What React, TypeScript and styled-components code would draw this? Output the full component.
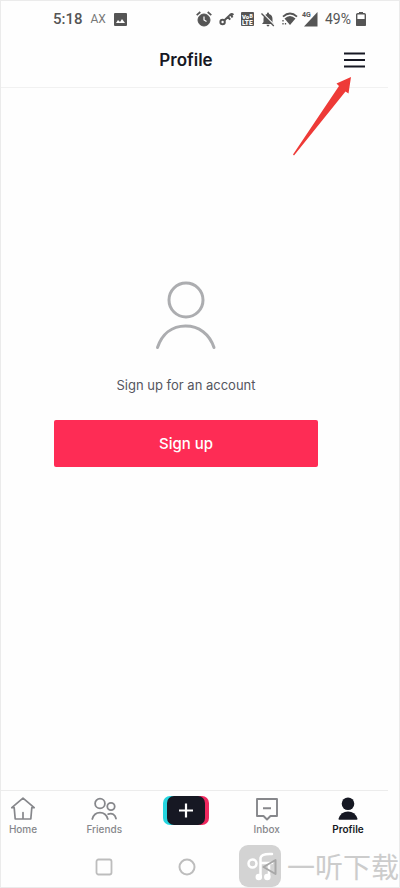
import React from "react";
import styled, { createGlobalStyle } from "styled-components";

const GlobalStyle = createGlobalStyle`
  * { box-sizing: border-box; }
  body { margin: 0; background: #fefefe; }
  button { font: inherit; color: inherit; background: none; border: 0; padding: 0; cursor: pointer; }
  svg { display: block; flex: none; overflow: visible; }
`;

const Screen = styled.div`
  position: relative;
  display: flex;
  flex-direction: column;
  min-height: 100vh;
  border: 1px solid #ebebeb;
  padding-right: 11px;
  overflow: hidden;
  color: #161823;
  font-family: Inter, "Liberation Sans", sans-serif;
`;

const StatusBar = styled.div`
  display: flex;
  align-items: center;
  justify-content: space-between;
  height: 36px;
  padding: 0 22px 0 52px;
  color: #555;
  font-family: Roboto, sans-serif;
`;

const StatusGroup = styled.div<{ $gap: number }>`
  display: flex;
  align-items: center;
  gap: ${(p) => p.$gap}px;
`;

const Clock = styled.span`
  font-size: 15px;
  font-weight: 500;
`;

const Carrier = styled.span`
  font-size: 12px;
  color: #777;
`;

const Battery = styled.span`
  font-size: 14px;
`;

const Header = styled.header`
  display: grid;
  grid-template-columns: 1fr auto 1fr;
  align-items: center;
  height: 51px;
  padding: 0 17px 4px 0;
  border-bottom: 1px solid #f1f1f1;
`;

const Title = styled.h1`
  grid-column: 2;
  margin: 0;
  font-size: 17px;
  line-height: 24px;
  font-weight: 600;
`;

const MenuButton = styled.button`
  justify-self: end;
  padding: 4px 6px;
`;

const Main = styled.main`
  flex: 1;
  display: flex;
  flex-direction: column;
  align-items: center;
  padding: 194px 70px 0 53px;
`;

const Prompt = styled.p`
  margin: 24px 0 25px;
  font-size: 13px;
  line-height: 20px;
  color: #55565e;
`;

const SignUpButton = styled.button`
  align-self: stretch;
  height: 47px;
  border-radius: 2px;
  && {
    background: #fe2c55;
    color: #fff;
    font-size: 15px;
    font-weight: 500;
  }
`;

const TabBar = styled.nav`
  display: flex;
  justify-content: space-between;
  height: 57px;
  padding: 5px 18px 0 0;
  border-top: 1px solid #ececec;
`;

const Tab = styled.button<{ $active?: boolean }>`
  display: flex;
  flex-direction: column;
  align-items: center;
  width: 44px;
  && {
    color: ${(p) => (p.$active ? "#161823" : "#86878b")};
    font-size: 10px;
    line-height: 14px;
    font-weight: ${(p) => (p.$active ? 600 : 500)};
  }
`;

const SystemBar = styled.div`
  position: relative;
  z-index: 1;
  display: flex;
  justify-content: space-between;
  align-items: center;
  height: 40px;
  padding: 0 110px 0 94px;
`;

const SystemButton = styled.button`
  && {
    color: #bdbdbd;
  }
`;

const BackButton = styled(SystemButton)`
  && {
    color: #a8a8a8;
  }
`;

const Pointer = styled.svg`
  position: absolute;
  top: 75px;
  right: 47px;
`;

const Watermark = styled.div`
  position: absolute;
  right: 0;
  bottom: 0;
  display: flex;
  align-items: center;
  gap: 6px;
  color: #ccc;
  font-family: "Noto Sans CJK SC", sans-serif;
  font-size: 28px;
  line-height: 42px;
  white-space: nowrap;
  pointer-events: none;
`;

const ImageIcon = () => (
  <svg width="13" height="13" viewBox="0 0 13 13">
    <path fillRule="evenodd" d="M1 0h11q1 0 1 1v11q0 1-1 1H1q-1 0-1-1V1q0-1 1-1zM2 10h9L8 6 6 9 4 7z" fill="#555" />
  </svg>
);

const AlarmIcon = () => (
  <svg width="16" height="16" viewBox="0 0 16 16" fill="none" stroke="currentColor">
    <circle cx="8" cy="9" r="6" fill="currentColor" />
    <path d="M.7 4.2 4.3 1M15.3 4.2 11.7 1" strokeWidth="1.7" />
    <path d="M8 5.4V9l2.5 1.6" stroke="#fefefe" strokeWidth="1.2" />
  </svg>
);

const KeyIcon = () => (
  <svg width="15" height="14" viewBox="0 0 15 14" fill="none" stroke="currentColor" strokeWidth="2">
    <circle cx="3.6" cy="10" r="2.2" />
    <path d="M5.5 8.2 11 2.9q2-1.5 3.3.1M9 5l2.2 2.6M12 3l1.5 2.5" />
  </svg>
);

const VolteIcon = () => (
  <svg width="13" height="14" viewBox="0 0 13 14">
    <rect width="13" height="14" rx="1" fill="#555" />
    <g fill="#fff" fontFamily="Roboto, sans-serif" fontWeight="900">
      <text x="1" y="6.5" fontSize="6">Vo</text>
      <text x="8.5" y="5.5" fontSize="5">B</text>
      <text x="1" y="13" fontSize="6.5">LTE</text>
    </g>
  </svg>
);

const BellOffIcon = () => (
  <svg width="14" height="15" viewBox="0 0 14 15">
    <path d="M7 .5q1 0 1.100 1.400Q11.500 3 11.500 7v3L13 12H1l1.500-2V7q0-4 3.400-5.100Q6 .5 7 .5zM5.500 12.800h3q-.2 1.700-1.500 1.700t-1.500-1.700z" fill="currentColor" />
    <path d="M1.500 1 14 13.500" stroke="#fefefe" strokeWidth="1.200" />
    <path d="M.5 1.500 12.800 14" stroke="currentColor" strokeWidth="1.300" />
  </svg>
);

const WifiIcon = () => (
  <svg width="16" height="14" viewBox="0 0 16 14">
    <path d="M1 4.700Q8-1.700 15 4.700" stroke="currentColor" strokeWidth="1.800" fill="none" />
    <path d="M2.500 6.500Q8 1.500 13.500 6.500L8 13z" fill="currentColor" />
    <path d="M1 8v1.500M1 11v1.500M3.500 11v1.500" stroke="currentColor" strokeWidth="1.300" />
  </svg>
);

const SignalIcon = () => (
  <svg width="16" height="15" viewBox="0 0 16 15">
    <path d="M15.500 0v14.500H2z" fill="currentColor" />
    <text x="0" y="5" fontSize="7" fontWeight="700" fontFamily="Roboto, sans-serif" fill="currentColor" stroke="#fefefe" strokeWidth="1" paintOrder="stroke">4G</text>
  </svg>
);

const BatteryIcon = () => (
  <svg width="10" height="14" viewBox="0 0 10 14">
    <path d="M3 0h4v2H3zM0 7h10v6q0 1-1 1H1q-1 0-1-1z" fill="currentColor" />
    <rect x=".7" y="1.700" width="8.600" height="11.500" rx="1" stroke="currentColor" strokeWidth="1.400" fill="none" />
  </svg>
);

const MenuIcon = () => (
  <svg width="21" height="16" viewBox="0 0 21 16" stroke="#161823" strokeWidth="2">
    <path d="M0 1.500h21M0 8h21M0 14.500h21" />
  </svg>
);

const PersonOutline = () => (
  <svg width="60" height="69" viewBox="0 0 60 69" fill="none" stroke="#acadb0" strokeWidth="3" strokeLinecap="round">
    <circle cx="30" cy="18" r="17" />
    <path d="M1.500 65.500C6 52 16 44 29.500 44S53.500 52 58 65.500" />
  </svg>
);

const HomeIcon = () => (
  <svg width="26" height="26" viewBox="0 0 26 26" fill="none" stroke="currentColor" strokeWidth="1.700" strokeLinejoin="round" strokeLinecap="round">
    <path d="M1.800 11.700 13 2.200l11.200 9.500h-2.400L20.800 23H5.200L4.200 11.700zM13 16.500V23" />
  </svg>
);

const FriendsIcon = () => (
  <svg width="26" height="26" viewBox="0 0 26 26" fill="none" stroke="currentColor" strokeWidth="1.800" strokeLinecap="round">
    <circle cx="9" cy="7.500" r="4.900" />
    <circle cx="20" cy="10.500" r="3.700" />
    <path d="M1.300 23C2.500 18.500 5.300 16.600 9 16.600S15.500 18.500 16.800 23M17.200 18.100C21 16.500 24.200 18.500 25 22.500" />
  </svg>
);

const CreateIcon = () => (
  <svg width="46" height="30" viewBox="0 0 46 30">
    <rect width="38" height="29" rx="7" fill="#25d5df" />
    <rect x="8" width="38" height="29" rx="7" fill="#f0285f" />
    <rect x="4" width="38" height="29" rx="7" fill="#161823" />
    <path d="M16 14.500h14M23 7.500v14" stroke="#fff" strokeWidth="2.200" />
  </svg>
);

const InboxIcon = () => (
  <svg width="26" height="26" viewBox="0 0 26 26" fill="none" stroke="currentColor" strokeWidth="1.900" strokeLinejoin="round">
    <path d="M3 3h20v17h-6.500L13 23.500 9.500 20H3zM9 12.200h8" />
  </svg>
);

const ProfileIcon = () => (
  <svg width="26" height="26" viewBox="0 0 26 26" fill="currentColor">
    <circle cx="13" cy="7.800" r="6.300" />
    <path d="M3.500 22.700Q6 15.400 13 15.400t9.500 7.300q.2 1.100-1 1.100h-17q-1.200 0-1-1.100z" />
  </svg>
);

const WatermarkLogo = () => (
  <svg width="42" height="42" viewBox="0 0 42 42" fill="none" stroke="#fff" strokeWidth="2.500">
    <rect width="42" height="42" rx="9" fill="#d3d3d3" stroke="none" />
    <circle cx="13.500" cy="18.500" r="4" />
    <path d="M33 9Q22 8.500 21.500 13v19M21.500 18H33M30 18v14" strokeLinecap="round" />
    <circle cx="19.800" cy="32" r="2" fill="#fff" />
    <circle cx="28.300" cy="32" r="2" fill="#fff" />
  </svg>
);

const tabs = [
  { label: "Home", Icon: HomeIcon },
  { label: "Friends", Icon: FriendsIcon },
  { label: "", Icon: CreateIcon },
  { label: "Inbox", Icon: InboxIcon },
  { label: "Profile", Icon: ProfileIcon, active: true },
];

export default function App() {
  return (
    <>
      <GlobalStyle />
      <Screen>
        <StatusBar>
          <StatusGroup $gap={8}>
            <Clock>5:18</Clock>
            <Carrier>AX</Carrier>
            <ImageIcon />
          </StatusGroup>
          <StatusGroup $gap={7}>
            <AlarmIcon />
            <KeyIcon />
            <VolteIcon />
            <BellOffIcon />
            <StatusGroup $gap={4}>
              <WifiIcon />
              <SignalIcon />
            </StatusGroup>
            <StatusGroup $gap={5}>
              <Battery>49%</Battery>
              <BatteryIcon />
            </StatusGroup>
          </StatusGroup>
        </StatusBar>
        <Header>
          <Title>Profile</Title>
          <MenuButton aria-label="Menu">
            <MenuIcon />
          </MenuButton>
        </Header>
        <Main>
          <PersonOutline />
          <Prompt>Sign up for an account</Prompt>
          <SignUpButton>Sign up</SignUpButton>
        </Main>
        <TabBar>
          {tabs.map(({ label, Icon, active }) => (
            <Tab key={label} $active={active} aria-label={label || "Create"}>
              <Icon />
              {label && <span>{label}</span>}
            </Tab>
          ))}
        </TabBar>
        <SystemBar>
          <SystemButton aria-label="Recent apps">
            <svg width="18" height="18" viewBox="0 0 18 18" fill="none" stroke="currentColor" strokeWidth="1.800">
              <rect x="1.500" y="1.500" width="15" height="15" rx="2" />
            </svg>
          </SystemButton>
          <SystemButton aria-label="System home">
            <svg width="18" height="18" viewBox="0 0 18 18" fill="none" stroke="currentColor" strokeWidth="2">
              <circle cx="9" cy="9" r="7.500" />
            </svg>
          </SystemButton>
          <BackButton aria-label="Back">
            <svg width="18" height="18" viewBox="0 0 18 18" fill="none" stroke="currentColor" strokeWidth="2" strokeLinejoin="round">
              <path d="M15.500 2v14L3.500 9z" />
            </svg>
          </BackButton>
        </SystemBar>
        <Pointer width="60" height="80" viewBox="0 0 60 80">
          <path d="M59 1 44.500 7.500l2.500 2.500L1 78.500l1 1L53.500 15.500l3 2z" fill="#ee3a37" />
        </Pointer>
        <Watermark>
          <WatermarkLogo />
          <span>一听下载</span>
        </Watermark>
      </Screen>
    </>
  );
}
